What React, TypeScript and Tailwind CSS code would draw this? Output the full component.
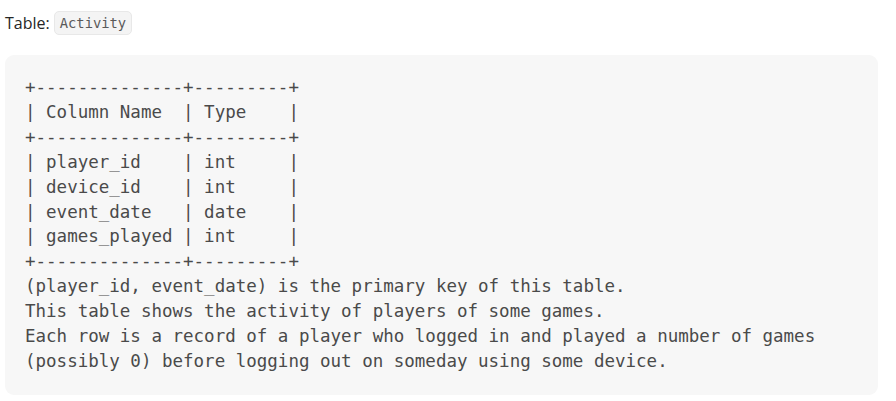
const schema = `+--------------+---------+
| Column Name  | Type    |
+--------------+---------+
| player_id    | int     |
| device_id    | int     |
| event_date   | date    |
| games_played | int     |
+--------------+---------+
(player_id, event_date) is the primary key of this table.
This table shows the activity of players of some games.
Each row is a record of a player who logged in and played a number of games
(possibly 0) before logging out on someday using some device.`;

export default function App() {
  return (
    <div className="w-[896px] h-[401px] bg-white pl-[5px] pr-[18px] pt-[9px]">
      {/* Table label */}
      <div className="flex items-center h-[28px] text-[16px] text-[#262626] font-['Open_Sans',sans-serif]">
        <span>Table:</span>
        <code className="ml-[4px] px-[5px] py-[2px] rounded-[5px] border border-[#e8e8e8] bg-[#f4f4f4] text-[13.8px] text-[#5a5a5a] font-['DejaVu_Sans_Mono',monospace] leading-[18px]">
          Activity
        </code>
      </div>

      {/* Schema block */}
      <pre className="mt-[18px] rounded-[9px] bg-[#f7f7f7] px-[20px] pt-[20px] pb-[21px] text-[17.5px] leading-[24.9px] text-[#4a4a4a] font-['DejaVu_Sans_Mono',monospace] whitespace-pre">
        {schema}
      </pre>
    </div>
  );
}
